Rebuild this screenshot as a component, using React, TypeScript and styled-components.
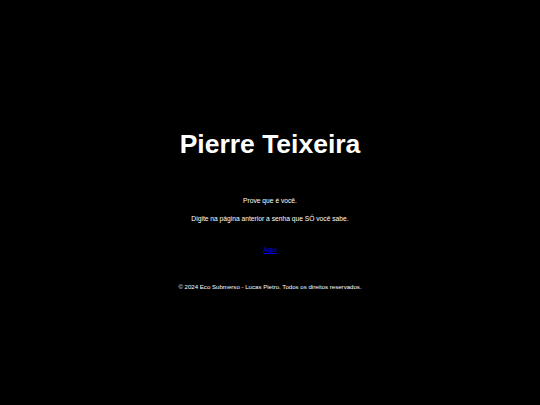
import React from "react";
import styled, { createGlobalStyle } from "styled-components";

const Global = createGlobalStyle`
  html, body { margin: 0; padding: 0; background: #000; }
  body { font-family: "Liberation Sans", Arial, sans-serif; color: #fff; }
`;

const Page = styled.main`
  box-sizing: border-box;
  width: 540px;
  height: 405px;
  padding-top: 129px;
  display: flex;
  flex-direction: column;
  align-items: center;
  text-align: center;
  background: #000;
`;

const Title = styled.h1`
  margin: 0 0 38px;
  font-size: 26.5px;
  font-weight: bold;
  line-height: 30px;
`;

const Para = styled.p`
  margin: 0 0 10px;
  font-size: 6.7px;
  line-height: 8px;
`;

const LinkWrap = styled.p`
  margin: 13px 0 0;
  font-size: 6.7px;
  line-height: 8px;
`;

const Link = styled.a`
  color: #0000ee;
  text-decoration: underline;
`;

const Footer = styled.footer`
  margin-top: 29px;
  font-size: 6.1px;
  line-height: 8px;
`;

export default function App() {
  return (
    <>
      <Global />
      <Page>
        <Title>Pierre Teixeira</Title>
        <Para>Prove que é você.</Para>
        <Para>Digite na página anterior a senha que SÓ você sabe.</Para>
        <LinkWrap>
          <Link href="#">Aqui</Link>
        </LinkWrap>
        <Footer>© 2024 Eco Submerso - Lucas Pietro. Todos os direitos reservados.</Footer>
      </Page>
    </>
  );
}
